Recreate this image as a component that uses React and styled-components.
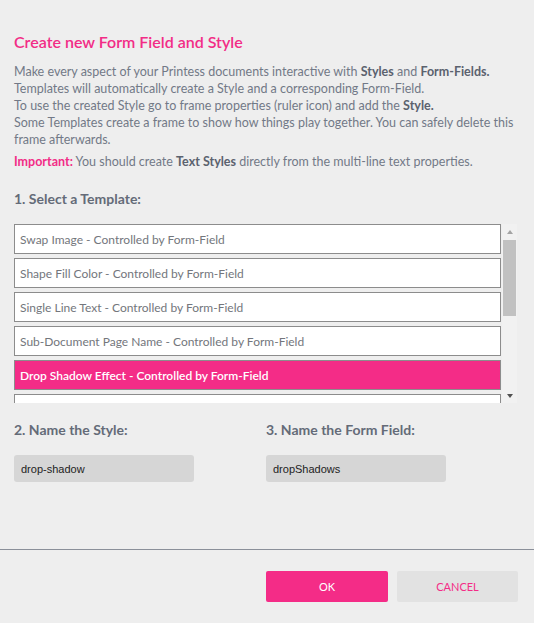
import styled, { createGlobalStyle } from "styled-components";

const GlobalStyle = createGlobalStyle`
  html, body {
    margin: 0;
    padding: 0;
    background: #eeeeee;
  }
  body {
    font-family: Lato, "Open Sans", sans-serif;
  }
  * {
    box-sizing: border-box;
  }
`;

const Dialog = styled.div`
  width: 534px;
  height: 623px;
  display: flex;
  flex-direction: column;
  background: #eeeeee;
`;

const Body = styled.div`
  flex: 1;
  padding: 32px 14px 0 14px;
`;

const Title = styled.h2`
  margin: 0;
  font-size: 16px;
  line-height: 20px;
  font-weight: 600;
  color: #f22c86;
`;

const Intro = styled.p`
  margin: 11px 0 0 0;
  font-size: 12.5px;
  line-height: 17px;
  color: #727987;
  b {
    color: #5b626e;
    font-weight: 700;
  }
`;

const Note = styled.p`
  margin: 5px 0 0 0;
  font-size: 12.5px;
  line-height: 17px;
  color: #727987;
  b {
    color: #5b626e;
    font-weight: 700;
  }
  strong {
    color: #f22c86;
    font-weight: 700;
  }
`;

const StepLabel = styled.div`
  font-size: 14px;
  line-height: 18px;
  font-weight: 700;
  color: #646b78;
  margin-top: ${(p) => p.top || 0}px;
`;

const ListFrame = styled.div`
  margin-top: 16px;
  width: 503px;
  height: 179px;
  display: flex;
  gap: 1px;
`;

const TemplateList = styled.div`
  flex: 1;
  overflow: hidden;
  display: flex;
  flex-direction: column;
  gap: 4px;
`;

const TemplateItem = styled.div`
  flex: none;
  height: 30px;
  padding: 0 5px;
  display: flex;
  align-items: center;
  border: 1px solid #8c8c8c;
  background: ${(p) => (p.selected ? "#f42c87" : "#ffffff")};
  color: ${(p) => (p.selected ? "#ffffff" : "#73767c")};
  font-size: 12px;
  font-weight: ${(p) => (p.selected ? 600 : 400)};
  white-space: nowrap;
`;

const Rail = styled.div`
  width: 15px;
  background: #f1f1f1;
  display: flex;
  flex-direction: column;
  align-items: center;
`;

const RailButton = styled.div`
  height: 15px;
  width: 15px;
  display: flex;
  align-items: center;
  justify-content: center;
`;

const Arrow = styled.span`
  width: 0;
  height: 0;
  border-left: 3.5px solid transparent;
  border-right: 3.5px solid transparent;
  ${(p) =>
    p.down
      ? `border-top: 4px solid #505050;`
      : `border-bottom: 4px solid #a3a3a3;`}
`;

const Thumb = styled.div`
  margin-top: 1px;
  width: 13px;
  height: 76px;
  background: #c1c1c1;
`;

const RailSpacer = styled.div`
  flex: 1;
`;

const NameRow = styled.div`
  margin-top: 18px;
  display: grid;
  grid-template-columns: 252px 252px;
`;

const NameField = styled.div`
  display: flex;
  flex-direction: column;
`;

const NameInput = styled.div`
  margin-top: 16px;
  width: 180px;
  height: 27px;
  border-radius: 3px;
  background: #d6d6d6;
  padding: 0 7px;
  display: flex;
  align-items: center;
  font-family: "Liberation Sans", Arial, sans-serif;
  font-size: 11px;
  color: #222222;
`;

const Footer = styled.div`
  height: 74px;
  border-top: 1px solid #8a8f99;
  padding: 21px 16px 0 266px;
  display: flex;
  gap: 9px;
`;

const Button = styled.div`
  width: ${(p) => (p.primary ? 122 : 121)}px;
  height: 31px;
  border-radius: 2px;
  display: flex;
  align-items: center;
  justify-content: center;
  font-size: 11px;
  text-transform: uppercase;
  background: ${(p) => (p.primary ? "#f42c87" : "#e2e2e2")};
  color: ${(p) => (p.primary ? "#ffffff" : "#f42c87")};
`;

const templates = [
  "Swap Image - Controlled by Form-Field",
  "Shape Fill Color - Controlled by Form-Field",
  "Single Line Text - Controlled by Form-Field",
  "Sub-Document Page Name - Controlled by Form-Field",
  "Drop Shadow Effect - Controlled by Form-Field",
  "Text Color - Controlled by Form-Field",
  "Frame Visibility - Controlled by Form-Field",
  "Font Family - Controlled by Form-Field",
  "Image Filter - Controlled by Form-Field",
  "Border Width - Controlled by Form-Field",
];

export default function App() {
  const selected = 4;
  return (
    <Dialog>
      <GlobalStyle />
      <Body>
        <Title>Create new Form Field and Style</Title>
        <Intro>
          Make every aspect of your Printess documents interactive with{" "}
          <b>Styles</b> and <b>Form-Fields.</b>
          <br />
          Templates will automatically create a Style and a corresponding
          Form-Field.
          <br />
          To use the created Style go to frame properties (ruler icon) and add
          the <b>Style.</b>
          <br />
          Some Templates create a frame to show how things play together. You
          can safely delete this frame afterwards.
        </Intro>
        <Note>
          <strong>Important:</strong> You should create <b>Text Styles</b>{" "}
          directly from the multi-line text properties.
        </Note>
        <StepLabel top={20}>1. Select a Template:</StepLabel>
        <ListFrame>
          <TemplateList>
            {templates.map((t, i) => (
              <TemplateItem key={i} selected={i === selected}>
                {t}
              </TemplateItem>
            ))}
          </TemplateList>
          <Rail>
            <RailButton>
              <Arrow />
            </RailButton>
            <Thumb />
            <RailSpacer />
            <RailButton>
              <Arrow down />
            </RailButton>
          </Rail>
        </ListFrame>
        <NameRow>
          <NameField>
            <StepLabel>2. Name the Style:</StepLabel>
            <NameInput>drop-shadow</NameInput>
          </NameField>
          <NameField>
            <StepLabel>3. Name the Form Field:</StepLabel>
            <NameInput>dropShadows</NameInput>
          </NameField>
        </NameRow>
      </Body>
      <Footer>
        <Button primary>OK</Button>
        <Button>Cancel</Button>
      </Footer>
    </Dialog>
  );
}
